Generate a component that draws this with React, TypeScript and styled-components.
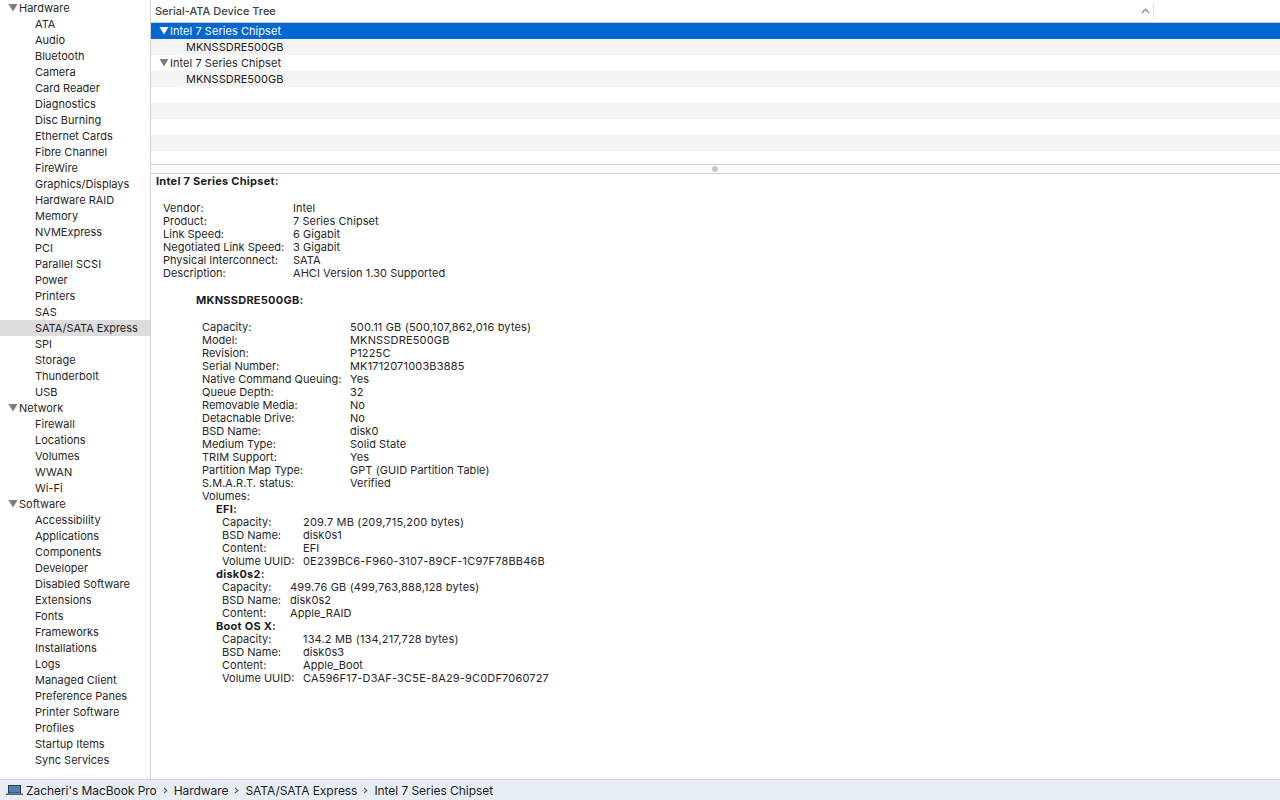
import React from "react";
import styled, { createGlobalStyle } from "styled-components";

const GlobalStyle = createGlobalStyle`
    html, body {
        margin: 0;
        padding: 0;
        background: #fff;
    }
    body {
        font-family: "Inter", "Liberation Sans", sans-serif;
        font-size: 11px;
        color: #262626;
    }
`;

const Window = styled.div`
    width: 1280px;
    height: 800px;
    display: flex;
    flex-direction: column;
    overflow: hidden;
`;
const Main = styled.div`
    flex: 1;
    min-height: 0;
    display: flex;
`;
const Sidebar = styled.ul`
    width: 150px;
    margin: 0;
    padding: 0;
    list-style: none;
    border-right: 1px solid #d4d4d4;
`;
const SideItem = styled.li<{ $group?: boolean; $active?: boolean }>`
    height: 16px;
    line-height: 16px;
    padding-left: ${({ $group }) => ($group ? "19px" : "35px")};
    position: relative;
    white-space: nowrap;
    letter-spacing: ${({ $active }) => ($active ? "-0.05px" : "0")};
    background: ${({ $active }) => ($active ? "#dcdcdc" : "transparent")};
`;
const GroupArrow = styled.svg`
    position: absolute;
    left: 8px;
    top: 3px;
    width: 10px;
    height: 9px;
`;
const Content = styled.div`
    flex: 1;
    min-width: 0;
    display: flex;
    flex-direction: column;
`;
const TreeHead = styled.div`
    height: 22px;
    flex: none;
    display: flex;
    align-items: center;
    border-top: 1px solid #d4d4d4;
    border-bottom: 1px solid #cfcfcf;
    box-sizing: content-box;
    margin-top: -1px;
`;
const HeadCell = styled.div`
    width: 1003px;
    height: 17px;
    flex: none;
    display: flex;
    align-items: center;
    justify-content: space-between;
    box-sizing: border-box;
    padding: 0 3px 0 4px;
    border-right: 1px solid #e4e4e4;
    font-weight: 500;
    color: #404040;
`;
const Tree = styled.div`
    flex: none;
    height: 141px;
`;
const TreeRow = styled.div<{ $even?: boolean; $selected?: boolean; $child?: boolean }>`
    height: 16px;
    line-height: 16px;
    position: relative;
    padding-left: ${({ $child }) => ($child ? "35px" : "19px")};
    letter-spacing: ${({ $child }) => ($child ? "0" : "0.05px")};
    color: ${({ $selected }) => ($selected ? "#fff" : "#262626")};
    background: ${({ $selected, $even }) => ($selected ? "#0068d0" : $even ? "#f4f4f4" : "#fff")};
`;
const Divider = styled.div`
    height: 8px;
    flex: none;
    display: flex;
    align-items: center;
    justify-content: center;
    padding-right: 2px;
    background: #fbfbfb;
    border-top: 1px solid #d4d4d4;
    border-bottom: 1px solid #d4d4d4;
`;
const Dimple = styled.span`
    width: 6px;
    height: 6px;
    border-radius: 50%;
    background: #c8c8c8;
`;
const Detail = styled.div`
    flex: 1;
    min-height: 0;
    padding: 1px 0 0 5px;
    line-height: 13px;
`;
const Heading = styled.div<{ $indent?: number; $after?: number }>`
    font-weight: 700;
    letter-spacing: 0.25px;
    color: #1c1c1c;
    white-space: nowrap;
    padding-left: ${({ $indent }) => $indent ?? 0}px;
    margin-bottom: ${({ $after }) => $after ?? 0}px;
`;
const Props = styled.div<{ $indent: number; $label: number; $after?: number }>`
    display: grid;
    grid-template-columns: ${({ $label }) => $label}px 1fr;
    padding-left: ${({ $indent }) => $indent}px;
    margin-bottom: ${({ $after }) => $after ?? 0}px;
    white-space: nowrap;
`;
// digit-heavy values run a little wider in the reference font
const Value = styled.span<{ $digits?: boolean }>`
    letter-spacing: ${({ $digits }) => ($digits ? "0.17px" : "0.05px")};
`;
const StatusBar = styled.div`
    height: 20px;
    flex: none;
    display: flex;
    align-items: center;
    gap: 6px;
    padding-left: 6px;
    font-size: 12px;
    letter-spacing: -0.06px;
    color: #1e1e1e;
    background: #e7edf5;
    border-top: 1px solid #d4d4d4;
`;
const Crumb = styled.span`
    white-space: nowrap;
`;
const CrumbSep = styled.svg`
    width: 5px;
    height: 7px;
    flex: none;
`;
const LaptopIcon = styled.svg`
    width: 17px;
    height: 10px;
    flex: none;
    margin-right: -3px;
`;

type Pair = [string, string];

const hardware = ["ATA", "Audio", "Bluetooth", "Camera", "Card Reader", "Diagnostics", "Disc Burning", "Ethernet Cards", "Fibre Channel", "FireWire", "Graphics/Displays", "Hardware RAID", "Memory", "NVMExpress", "PCI", "Parallel SCSI", "Power", "Printers", "SAS", "SATA/SATA Express", "SPI", "Storage", "Thunderbolt", "USB"];
const network = ["Firewall", "Locations", "Volumes", "WWAN", "Wi-Fi"];
const software = ["Accessibility", "Applications", "Components", "Developer", "Disabled Software", "Extensions", "Fonts", "Frameworks", "Installations", "Logs", "Managed Client", "Preference Panes", "Printer Software", "Profiles", "Startup Items", "Sync Services"];
const groups: [string, string[]][] = [["Hardware", hardware], ["Network", network], ["Software", software]];

const chipset: Pair[] = [
    ["Vendor:", "Intel"],
    ["Product:", "7 Series Chipset"],
    ["Link Speed:", "6 Gigabit"],
    ["Negotiated Link Speed:", "3 Gigabit"],
    ["Physical Interconnect:", "SATA"],
    ["Description:", "AHCI Version 1.30 Supported"],
];
const drive: Pair[] = [
    ["Capacity:", "500.11 GB (500,107,862,016 bytes)"],
    ["Model:", "MKNSSDRE500GB"],
    ["Revision:", "P1225C"],
    ["Serial Number:", "MK1712071003B3885"],
    ["Native Command Queuing:", "Yes"],
    ["Queue Depth:", "32"],
    ["Removable Media:", "No"],
    ["Detachable Drive:", "No"],
    ["BSD Name:", "disk0"],
    ["Medium Type:", "Solid State"],
    ["TRIM Support:", "Yes"],
    ["Partition Map Type:", "GPT (GUID Partition Table)"],
    ["S.M.A.R.T. status:", "Verified"],
    ["Volumes:", ""],
];
const volumes: { name: string; label: number; rows: Pair[] }[] = [
    {
        name: "EFI:",
        label: 81,
        rows: [
            ["Capacity:", "209.7 MB (209,715,200 bytes)"],
            ["BSD Name:", "disk0s1"],
            ["Content:", "EFI"],
            ["Volume UUID:", "0E239BC6-F960-3107-89CF-1C97F78BB46B"],
        ],
    },
    {
        name: "disk0s2:",
        label: 68,
        rows: [
            ["Capacity:", "499.76 GB (499,763,888,128 bytes)"],
            ["BSD Name:", "disk0s2"],
            ["Content:", "Apple_RAID"],
        ],
    },
    {
        name: "Boot OS X:",
        label: 81,
        rows: [
            ["Capacity:", "134.2 MB (134,217,728 bytes)"],
            ["BSD Name:", "disk0s3"],
            ["Content:", "Apple_Boot"],
            ["Volume UUID:", "CA596F17-D3AF-3C5E-8A29-9C0DF7060727"],
        ],
    },
];

function Arrow({ color }: { color: string }) {
    return (
        <GroupArrow viewBox="0 0 10 9">
            <path d="M0.5 1 H9.5 L5 8.5 Z" fill={color} />
        </GroupArrow>
    );
}

function PropRows({ rows }: { rows: Pair[] }) {
    return (
        <>
            {rows.map(([k, v]) => (
                <React.Fragment key={k}>
                    <span>{k}</span>
                    <Value $digits={/\d{3}/.test(v)}>{v}</Value>
                </React.Fragment>
            ))}
        </>
    );
}

function Sep() {
    return (
        <CrumbSep viewBox="0 0 5 7">
            <path d="M1 0.8 L3.8 3.5 L1 6.2" fill="none" stroke="#555" strokeWidth="1.1" />
        </CrumbSep>
    );
}

export default function App() {
    return (
        <>
            <GlobalStyle />
            <Window>
                <Main>
                    <Sidebar>
                        {groups.map(([name, items]) => (
                            <React.Fragment key={name}>
                                <SideItem $group>
                                    <Arrow color="#7d7d7d" />
                                    {name}
                                </SideItem>
                                {items.map((item) => (
                                    <SideItem key={item} $active={item === "SATA/SATA Express"}>{item}</SideItem>
                                ))}
                            </React.Fragment>
                        ))}
                    </Sidebar>
                    <Content>
                        <TreeHead>
                            <HeadCell>
                                Serial-ATA Device Tree
                                <svg width="9" height="6" viewBox="0 0 9 6">
                                    <path d="M0.8 5 L4.5 1.2 L8.2 5" fill="none" stroke="#8c8c8c" strokeWidth="1.3" />
                                </svg>
                            </HeadCell>
                        </TreeHead>
                        <Tree>
                            <TreeRow $selected><Arrow color="#fff" />Intel 7 Series Chipset</TreeRow>
                            <TreeRow $even $child>MKNSSDRE500GB</TreeRow>
                            <TreeRow><Arrow color="#7d7d7d" />Intel 7 Series Chipset</TreeRow>
                            <TreeRow $even $child>MKNSSDRE500GB</TreeRow>
                            <TreeRow />
                            <TreeRow $even />
                            <TreeRow />
                            <TreeRow $even />
                        </Tree>
                        <Divider><Dimple /></Divider>
                        <Detail>
                            <Heading $after={14}>Intel 7 Series Chipset:</Heading>
                            <Props $indent={7} $label={130} $after={14}>
                                <PropRows rows={chipset} />
                            </Props>
                            <Heading $indent={40} $after={14}>MKNSSDRE500GB:</Heading>
                            <Props $indent={46} $label={148}>
                                <PropRows rows={drive} />
                            </Props>
                            {volumes.map((v) => (
                                <React.Fragment key={v.name}>
                                    <Heading $indent={60}>{v.name}</Heading>
                                    <Props $indent={66} $label={v.label}>
                                        <PropRows rows={v.rows} />
                                    </Props>
                                </React.Fragment>
                            ))}
                        </Detail>
                    </Content>
                </Main>
                <StatusBar>
                    <LaptopIcon viewBox="0 0 17 10">
                        <rect x="2" y="0" width="13" height="8.5" fill="#2c3a4c" />
                        <rect x="3" y="1" width="11" height="6.5" fill="#4a7fb8" />
                        <rect x="0" y="8.5" width="17" height="1.5" fill="#5f646b" />
                    </LaptopIcon>
                    <Crumb>Zacheri's MacBook Pro</Crumb>
                    <Sep />
                    <Crumb>Hardware</Crumb>
                    <Sep />
                    <Crumb>SATA/SATA Express</Crumb>
                    <Sep />
                    <Crumb>Intel 7 Series Chipset</Crumb>
                </StatusBar>
            </Window>
        </>
    );
}
